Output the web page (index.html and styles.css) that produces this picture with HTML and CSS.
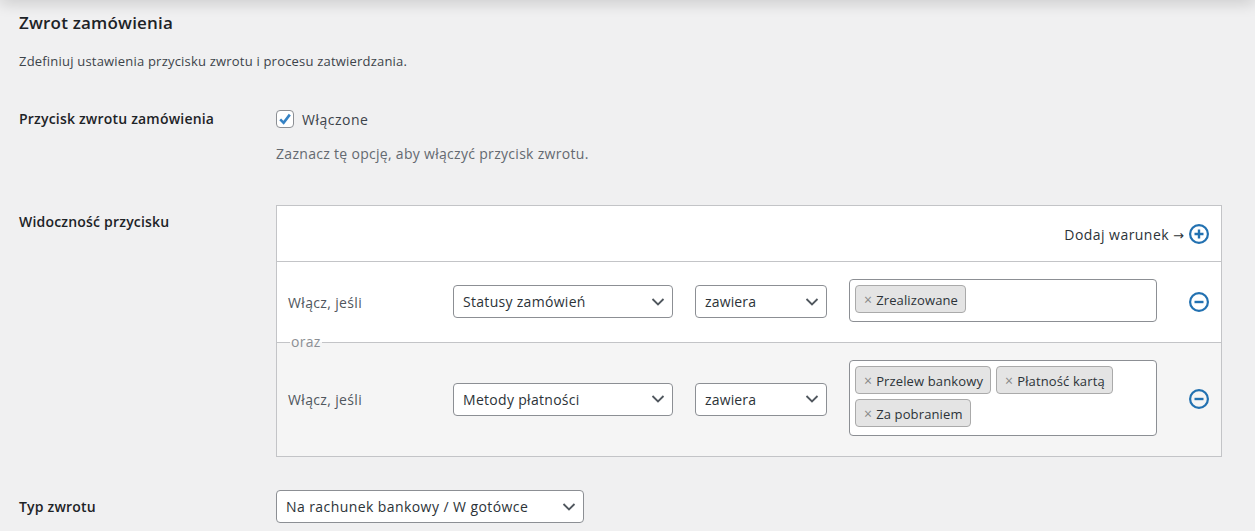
FILE: index.html
```html
<!DOCTYPE html>
<html lang="pl">
<head>
<meta charset="utf-8">
<title>Zwrot zamówienia</title>
<link rel="stylesheet" href="styles.css">
</head>
<body>
<div class="topbar"></div>
<main class="page">
  <h2 class="title">Zwrot zamówienia</h2>
  <p class="intro">Zdefiniuj ustawienia przycisku zwrotu i procesu zatwierdzania.</p>

  <section class="field field-button">
    <div class="label">Przycisk zwrotu zamówienia</div>
    <div class="control">
      <label class="check">
        <span class="box">
          <svg viewBox="0 0 18 18" width="18" height="18"><path d="M4.2 9.4 7.6 12.8 13.8 4.6" fill="none" stroke="#3582c4" stroke-width="2.6"/></svg>
        </span>
        <span class="check-text">Włączone</span>
      </label>
      <p class="desc">Zaznacz tę opcję, aby włączyć przycisk zwrotu.</p>
    </div>
  </section>

  <section class="field field-vis">
    <div class="label">Widoczność przycisku</div>
    <div class="rules">
      <div class="rules-head">
        <span class="add-text">Dodaj warunek <span class="arrow">→</span></span>
        <svg class="round" viewBox="0 0 20 20" width="20" height="20"><circle cx="10" cy="10" r="8.9" fill="none" stroke="#2271b1" stroke-width="2.2"/><path d="M10 5.5v9M5.5 10h9" stroke="#2271b1" stroke-width="2.4" fill="none"/></svg>
      </div>
      <div class="rule">
        <span class="rule-label">Włącz, jeśli</span>
        <div class="select"><span class="select-text">Statusy zamówień</span><svg class="chev" viewBox="0 0 14 8" width="14" height="8"><path d="M1.5 1 7 6.5 12.5 1" fill="none" stroke="#50575e" stroke-width="1.8"/></svg></div>
        <div class="select"><span>zawiera</span><svg class="chev" viewBox="0 0 14 8" width="14" height="8"><path d="M1.5 1 7 6.5 12.5 1" fill="none" stroke="#50575e" stroke-width="1.8"/></svg></div>
        <div class="tags">
          <span class="tag"><i>×</i>Zrealizowane</span>
        </div>
        <svg class="round" viewBox="0 0 20 20" width="20" height="20"><circle cx="10" cy="10" r="8.9" fill="none" stroke="#2271b1" stroke-width="2.2"/><path d="M5.5 10h9" stroke="#2271b1" stroke-width="2.4" fill="none"/></svg>
      </div>
      <div class="rule rule-alt">
        <span class="oraz">oraz</span>
        <span class="rule-label">Włącz, jeśli</span>
        <div class="select"><span class="select-text">Metody płatności</span><svg class="chev" viewBox="0 0 14 8" width="14" height="8"><path d="M1.5 1 7 6.5 12.5 1" fill="none" stroke="#50575e" stroke-width="1.8"/></svg></div>
        <div class="select"><span>zawiera</span><svg class="chev" viewBox="0 0 14 8" width="14" height="8"><path d="M1.5 1 7 6.5 12.5 1" fill="none" stroke="#50575e" stroke-width="1.8"/></svg></div>
        <div class="tags">
          <span class="tag"><i>×</i>Przelew bankowy</span>
          <span class="tag"><i>×</i>Płatność kartą</span>
          <span class="tag"><i>×</i>Za pobraniem</span>
        </div>
        <svg class="round" viewBox="0 0 20 20" width="20" height="20"><circle cx="10" cy="10" r="8.9" fill="none" stroke="#2271b1" stroke-width="2.2"/><path d="M5.5 10h9" stroke="#2271b1" stroke-width="2.4" fill="none"/></svg>
      </div>
    </div>
  </section>

  <section class="field field-type">
    <div class="label">Typ zwrotu</div>
    <div class="select select-wide"><span class="wide-text">Na rachunek bankowy / W gotówce</span><svg class="chev" viewBox="0 0 14 8" width="14" height="8"><path d="M1.5 1 7 6.5 12.5 1" fill="none" stroke="#50575e" stroke-width="1.8"/></svg></div>
  </section>
</main>
</body>
</html>
```
FILE: styles.css
```css
* { box-sizing: border-box; }
html, body { margin: 0; height: 531px; overflow: hidden; }
body {
  background: #f0f0f1;
  color: #3c434a;
  font-family: "Open Sans", "Noto Sans", sans-serif;
  font-size: 14px;
  letter-spacing: 0.3px;
  position: relative;
}
.topbar {
  position: absolute;
  left: 0; right: 0; top: -12px;
  height: 12px;
  box-shadow: 0 2px 16px rgba(0, 0, 0, .2);
}
.page { padding: 12px 0 0 19px; }
.title {
  margin: 0;
  height: 22px;
  font-size: 17px;
  line-height: 22px;
  font-weight: 600;
  letter-spacing: 0.2px;
  color: #1d2327;
}
.intro {
  margin: 18px 0 0;
  height: 18px;
  font-size: 13px;
  line-height: 18px;
  letter-spacing: 0.2px;
}
.field { display: grid; grid-template-columns: 257px 1fr; }
.label {
  font-size: 14px;
  font-weight: 600;
  letter-spacing: 0.2px;
  color: #1d2327;
  line-height: 20px;
}
.field-button { margin-top: 39px; }
.check { display: flex; align-items: center; gap: 8px; height: 20px; }
.check-text { letter-spacing: 0.5px; }
.box {
  width: 18px; height: 18px;
  background: #fff;
  border: 1px solid #8c8f94;
  border-radius: 4px;
  display: flex;
  align-items: center;
  justify-content: center;
}
.box svg { flex: none; }
.desc { margin: 15px 0 0; line-height: 20px; color: #646970; }
.field-vis { margin-top: 41px; }
.field-vis .label { margin-top: 7px; }
.rules {
  width: 946px;
  background: #fff;
  border: 1px solid #c3c4c7;
}
.rules-head {
  height: 55px;
  display: flex;
  align-items: center;
  justify-content: flex-end;
  gap: 5px;
  padding-right: 12px;
  color: #2c3338;
}
.add-text { letter-spacing: 0.45px; padding-top: 2px; }
.arrow { font-family: "DejaVu Sans", sans-serif; font-size: 13px; letter-spacing: 0; }
.rule {
  position: relative;
  display: grid;
  grid-template-columns: 143px 220px 132px 308px 20px;
  column-gap: 22px;
  align-items: center;
  padding: 17px 0 20px 11px;
  border-top: 1px solid #c3c4c7;
}
.rule .round { margin: 2px 0 0 10px; }
.rule .select { margin-top: 2px; }
.rule-alt { background: #f5f5f5; }
.rule-label { color: #50575e; letter-spacing: 0.35px; padding-top: 3px; }
.oraz {
  position: absolute;
  left: 13px;
  top: -10px;
  padding: 0 1px;
  line-height: 18px;
  color: #8c8f94;
  background: linear-gradient(#fff 50%, #f5f5f5 50%);
}
.select {
  height: 33px;
  background: #fff;
  border: 1px solid #8c8f94;
  border-radius: 4px;
  display: flex;
  align-items: center;
  justify-content: space-between;
  padding: 0 7px 0 9px;
  color: #2c3338;
  letter-spacing: 0.15px;
}
.select > span { white-space: nowrap; }
.select-text { letter-spacing: 0.3px; }
.wide-text { letter-spacing: 0.42px; }
.chev { flex: none; }
.tags {
  min-height: 43px;
  background: #fff;
  border: 1px solid #8c8f94;
  border-radius: 4px;
  display: flex;
  flex-wrap: wrap;
  align-content: flex-start;
  gap: 5px;
  padding: 5px 5px 8px;
}
.tag {
  height: 28px;
  display: inline-flex;
  align-items: center;
  padding: 1px 7px 0 8px;
  background: #e4e4e4;
  border: 1px solid #aaa;
  border-radius: 4px;
  color: #2c3338;
  font-size: 13px;
  letter-spacing: 0.13px;
  white-space: nowrap;
}
.tag i {
  font-style: normal;
  color: #888;
  margin-right: 4px;
  font-size: 14px;
}
.field-type { margin-top: 33px; align-items: center; }
.select-wide { width: 308px; }
```
